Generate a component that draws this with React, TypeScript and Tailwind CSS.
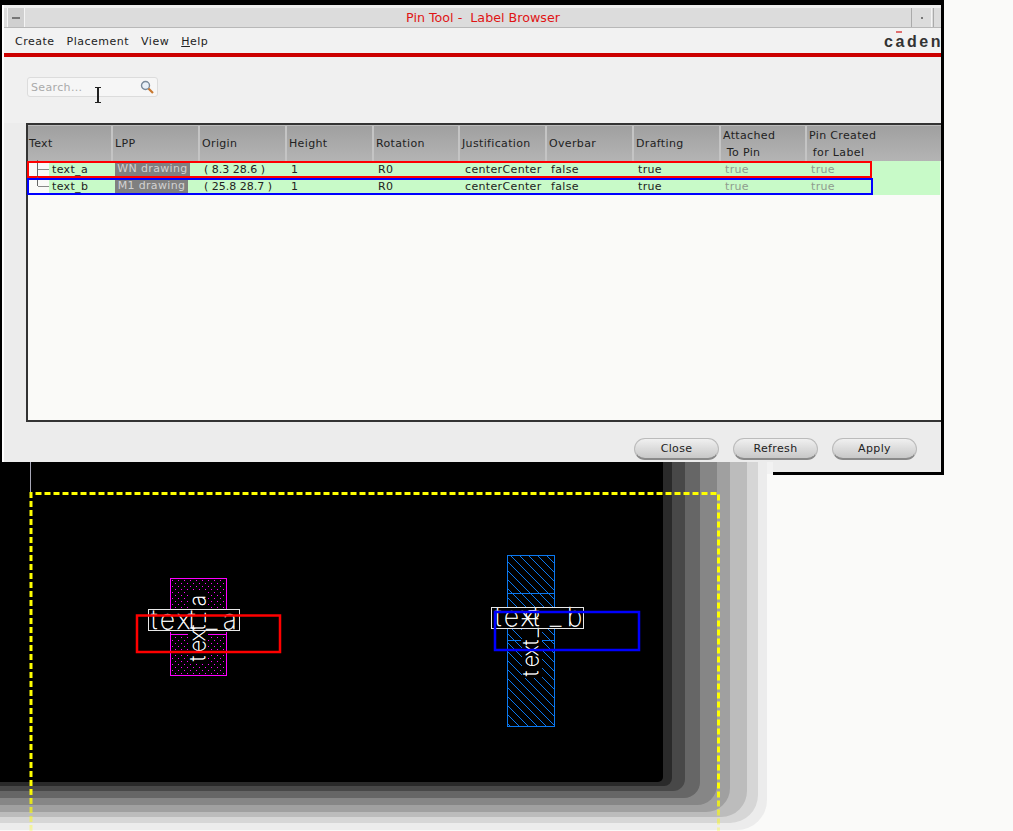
import React from 'react';

const columns = ['Text', 'LPP', 'Origin', 'Height', 'Rotation', 'Justification', 'Overbar', 'Drafting'];

const rows = [
  { name: 'text_a', lpp: 'WN drawing', chip: 'w-[75px]', origin: '( 8.3 28.6 )', box: 'border-[#ff0000] w-[845px]', stem: 'h-[16px] -top-[1px]' },
  { name: 'text_b', lpp: 'M1 drawing', chip: 'w-[73px]', origin: '( 25.8 28.7 )', box: 'border-[#0000ff] w-[846px]', stem: 'h-[9px] -top-[1px]' },
];

const gridCols = 'grid-cols-[85px_87px_87px_87px_86px_87px_87px_87px_86px_1fr]';

// halo around the layout canvas, outermost band first
const bands = [
  { w: 767, h: 830, r: 30, fill: '#ececec' },
  { w: 758, h: 823, r: 28, fill: '#d6d6d6' },
  { w: 747, h: 817, r: 26, fill: '#bcbcbc' },
  { w: 730, h: 812, r: 24, fill: '#a0a0a0' },
  { w: 717, h: 805, r: 20, fill: '#868686' },
  { w: 700, h: 798, r: 16, fill: '#666666' },
  { w: 685, h: 791, r: 12, fill: '#484848' },
  { w: 672, h: 786, r: 8, fill: '#2a2a2a' },
  { w: 663, h: 782, r: 5, fill: '#000000' },
];

function HeaderCell({ children }: { children: React.ReactNode }) {
  return (
    <div className="border-r-2 border-[#c4c4c4] last:border-r-0 pl-[2px] first:pl-[1px] flex flex-col justify-center leading-[17px] whitespace-pre">
      {children}
    </div>
  );
}

function WindowBar() {
  return (
    <div className="h-[22px] flex items-stretch bg-[#dcdcdc] border-t-2 border-[#eeeeee] border-b border-b-[#b8b8b8] pr-[1px]">
      <div className="w-[18px] ml-[3px] border-x border-[#f4f4f4] bg-[#d0d0d0] flex items-center justify-center">
        <div className="w-[8px] h-[2px] bg-[#777]" />
      </div>
      <div className="flex-1 text-center text-[#e01414] text-[12.7px] leading-[19px] whitespace-pre border-r border-[#aaa] pl-[30px]">
        Pin Tool -  Label Browser
      </div>
      <div className="w-[20px] flex items-center justify-center border-r border-[#f4f4f4]">
        <div className="w-[2px] h-[2px] bg-[#777]" />
      </div>
      <div className="w-[7px] ml-[1px] border-l border-[#aaa]" />
    </div>
  );
}

function MenuBar() {
  return (
    <div className="h-[25px] flex items-center justify-between bg-[#f2f2f2] pl-[11px] pt-[3px]">
      <div className="flex gap-[12px] text-[11px] tracking-[0.5px] text-[#222]">
        <span>Create</span>
        <span>Placement</span>
        <span>View</span>
        <span><span className="underline">H</span>elp</span>
      </div>
      <div className="relative text-[16px] font-bold text-[#333] tracking-[2.6px] w-[57px] whitespace-nowrap font-['Liberation_Sans',sans-serif]">
        <span className="absolute left-[12px] top-[1px] w-[6px] h-[2px] bg-[#e07070]" />
        caden
      </div>
    </div>
  );
}

function LabelTable() {
  return (
    <div className="ml-[22px] h-[299px] border-y-2 border-l-2 border-[#333] bg-[#fafaf8] text-[11px] tracking-[0.35px] text-[#222]">
      <div className={`grid ${gridCols} h-[36px] bg-gradient-to-b from-[#a0a0a0] to-[#b4b4b4] border-t border-[#bbb]`}>
        {columns.map(c => (
          <HeaderCell key={c}>{c}</HeaderCell>
        ))}
        <HeaderCell>{'Attached\n To Pin'}</HeaderCell>
        <HeaderCell>{'Pin Created\n for Label'}</HeaderCell>
      </div>
      {rows.map(r => (
        <div key={r.name} className={`relative grid ${gridCols} h-[17px] leading-[17px] bg-[#c8fac8] mr-[1px]`}>
          <div className="relative pl-[24px]">
            <div className="absolute left-0 top-0 bottom-0 w-[21px] bg-[#fafaf8]" />
            <div className={`absolute left-[9px] w-[1px] bg-[#666] ${r.stem}`} />
            <div className="absolute left-[10px] top-[8px] w-[11px] h-[1px] bg-[#888]" />
            <span className="relative">{r.name}</span>
          </div>
          <div className="pl-[2px]">
            <div className={`${r.chip} bg-[#808080] text-[#d2d2d2] text-center h-[16px] leading-[16px]`}>{r.lpp}</div>
          </div>
          <div className="pl-[4px] tracking-normal">{r.origin}</div>
          <div className="pl-[4px]">1</div>
          <div className="pl-[4px]">R0</div>
          <div className="pl-[5px]">centerCenter</div>
          <div className="pl-[4px]">false</div>
          <div className="pl-[4px]">true</div>
          <div className="pl-[4px] text-[#8f9c8f]">true</div>
          <div className="pl-[4px] text-[#8f9c8f]">true</div>
          <div className={`absolute -left-[1px] top-0 h-[17px] border-2 ${r.box}`} />
        </div>
      ))}
    </div>
  );
}

function ActionButton({ label }: { label: string }) {
  return (
    <button className="w-[85px] h-[22px] pt-[2px] rounded-full border border-[#bbb] border-b-2 border-b-[#8a8a8a] bg-gradient-to-b from-[#f0f0f0] to-[#c8c8c8] text-[11px] tracking-[0.35px] text-[#222]">
      {label}
    </button>
  );
}

function LayoutCanvas() {
  const stick = { fontFamily: 'Inter, "Liberation Sans", sans-serif', fontWeight: 100 };
  return (
    <div className="absolute left-0 top-[462px] w-[773px] h-[369px] bg-[#fafaf9] overflow-hidden">
      <svg className="absolute left-0 top-0" width="773" height="369" viewBox="0 462 773 369">
        <defs>
          <pattern id="dots" width="6" height="6" patternUnits="userSpaceOnUse">
            <rect x="1" y="1" width="1" height="1" fill="#ff00ff" />
            <rect x="4" y="4" width="1" height="1" fill="#ff00ff" />
          </pattern>
          <pattern id="hatch" width="9" height="9" patternUnits="userSpaceOnUse">
            <path d="M0 0L9 9M-1 8L1 10M8 -1L10 1" stroke="#0a78f0" strokeWidth="1" />
          </pattern>
          <linearGradient id="fade" gradientUnits="userSpaceOnUse" x1="0" y1="790" x2="0" y2="831">
            <stop offset="0" stopColor="#ffff00" />
            <stop offset="1" stopColor="#ffff00" stopOpacity="0.25" />
          </linearGradient>
        </defs>
        <rect x="0" y="462" width="773" height="12" fill="#f2f2f2" />
        {bands.map(b => (
          <rect key={b.w} x="-60" y="400" width={b.w + 60} height={b.h - 400} rx={b.r} fill={b.fill} />
        ))}
        <path d="M30.5 462V492" stroke="#a8a8b8" strokeWidth="1" fill="none" />
        <path d="M31 831V493.5H718.5V831" stroke="url(#fade)" strokeWidth="3" strokeDasharray="6 3" fill="none" />

        <rect x="170.5" y="578.5" width="56" height="97" fill="url(#dots)" stroke="#ff00ff" />
        <rect x="188" y="590" width="20" height="72" fill="#000" />
        <rect x="148" y="609" width="92" height="23" fill="#000" />
        <path d="M170 634.5H188M208 634.5H226" stroke="#ff00ff" />
        <text x="0 9 20 31 39 55" transform="translate(205 661) rotate(-90)" fontSize="21" fill="#fff" stroke="#fff" strokeWidth="0.5" style={stick}>text_a</text>
        <text x="151 160 177 189 206 223" y="629" fontSize="26" fill="#fff" stroke="#fff" strokeWidth="0.5" style={stick}>text_a</text>
        <rect x="148.5" y="609.5" width="91" height="21" fill="none" stroke="#e8e8e8" />
        <rect x="137" y="615.5" width="143" height="36.5" fill="none" stroke="#ff0000" strokeWidth="2.5" />

        <rect x="507.5" y="555.5" width="47" height="171" fill="url(#hatch)" stroke="#0a78f0" />
        <path d="M507 593.5H554" stroke="#0a78f0" />
        <rect x="491" y="607" width="92" height="22" fill="#000" />
        <rect x="522" y="629" width="20" height="49" fill="#000" />
        <path d="M507 640.5H521M542 640.5H554" stroke="#0a78f0" />
        <text x="0 9 20 31 39 55" transform="translate(538 676) rotate(-90)" fontSize="21" fill="#fff" stroke="#fff" strokeWidth="0.5" style={stick}>text_b</text>
        <text x="495 504 521 533 550 567" y="626" fontSize="26" fill="#fff" stroke="#fff" strokeWidth="0.5" style={stick}>text_b</text>
        <rect x="491.5" y="607.5" width="92" height="21" fill="none" stroke="#e8e8e8" />
        <rect x="495" y="612" width="144" height="38" fill="none" stroke="#0000ff" strokeWidth="2.5" />
      </svg>
    </div>
  );
}

export default function App() {
  return (
    <div className="relative w-[1013px] h-[831px] bg-[#fafaf9] overflow-hidden font-['DejaVu_Sans',sans-serif]">
      {/* pin tool window floats over the layout canvas */}
      <div className="absolute left-0 top-0 w-[944px] h-[475px] flex flex-col bg-[#ececec] border-t-[5px] border-r-[3px] border-b-[3px] border-l-2 border-black">
        <div className="flex-1 flex flex-col border-l-2 border-white pt-[1px]">
          <WindowBar />
          <MenuBar />
          <div className="h-[4px] bg-[#cc0000]" />
          <div className="h-[66px] pt-[20px] pl-[23px] bg-[#f0f0f0]">
            <div className="relative w-[131px] h-[20px] bg-[#f6f6f6] border border-[#dcdcdc] rounded-[3px] pl-[3px] text-[11px] tracking-[0.35px] leading-[20px] text-[#aaa]">
              Search...
              <svg className="absolute right-[3px] top-[2px]" width="14" height="14" viewBox="0 0 14 14">
                <circle cx="5.5" cy="5.5" r="4" fill="#e8f0f8" stroke="#7a8a9a" strokeWidth="1.4" />
                <path d="M8.5 8.5L13 13" stroke="#c87830" strokeWidth="2.2" />
              </svg>
              <div className="absolute left-[69px] top-[9px] w-[2px] h-[16px] bg-[#222]">
                <div className="absolute -left-[2px] top-0 w-[6px] h-[1px] bg-[#222]" />
                <div className="absolute -left-[2px] bottom-0 w-[6px] h-[1px] bg-[#222]" />
              </div>
            </div>
          </div>
          <LabelTable />
          <div className="flex-1 flex justify-end gap-[14px] pt-[16px] pr-[24px] bg-[#ececec]">
            <ActionButton label="Close" />
            <ActionButton label="Refresh" />
            <ActionButton label="Apply" />
          </div>
        </div>
      </div>
      <LayoutCanvas />
    </div>
  );
}
